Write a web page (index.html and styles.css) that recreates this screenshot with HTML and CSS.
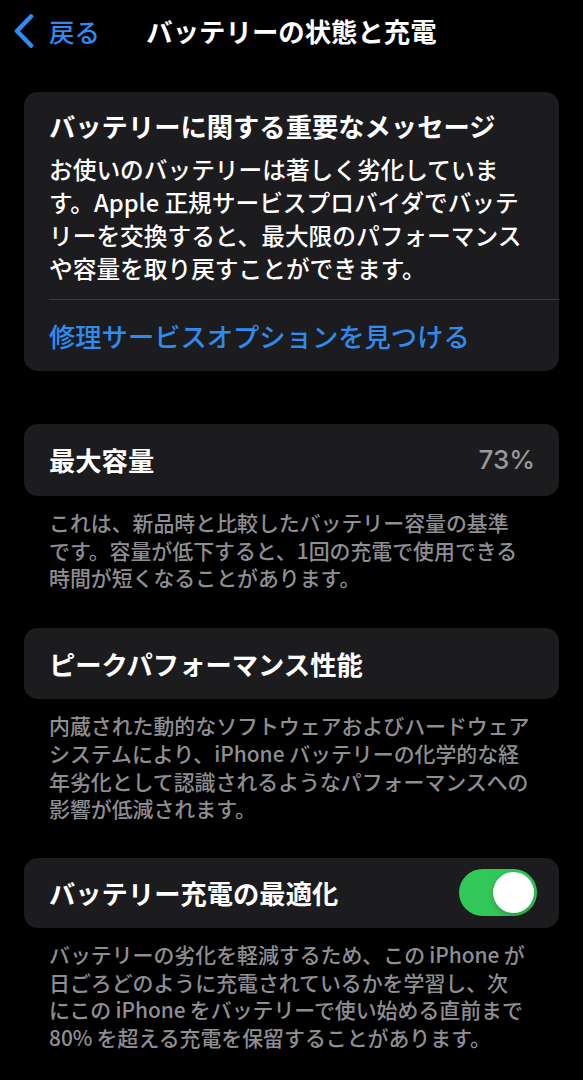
FILE: index.html
```html
<!DOCTYPE html>
<html lang="ja">
<head>
<meta charset="utf-8">
<title>バッテリーの状態と充電</title>
<link rel="stylesheet" href="styles.css">
</head>
<body>
<header class="nav">
  <div class="nav-left">
    <svg class="chev" width="22" height="34" viewBox="0 0 22 34" aria-hidden="true">
      <polyline points="18,2.5 4,17 18,31.5" fill="none" stroke="#2f8bf0" stroke-width="4.6" stroke-linecap="round" stroke-linejoin="round"/>
    </svg>
    <span class="back">戻る</span>
  </div>
  <h1 class="nav-title">バッテリーの状態と充電</h1>
  <div></div>
</header>

<main class="content">
  <section class="card msg">
    <h2 class="msg-title">バッテリーに関する重要なメッセージ</h2>
    <p class="msg-body">お使いのバッテリーは著しく劣化していま<br>す。Apple 正規サービスプロバイダでバッテ<br>リーを交換すると、最大限のパフォーマンス<br>や容量を取り戻すことができます。</p>
    <div class="divider"></div>
    <div class="link-row"><span class="link">修理サービスオプションを見つける</span></div>
  </section>

  <section class="card row first">
    <span class="label">最大容量</span>
    <span class="value">73%</span>
  </section>
  <p class="foot">これは、新品時と比較したバッテリー容量の基準<br>です。容量が低下すると、1回の充電で使用できる<br>時間が短くなることがあります。</p>

  <section class="card row">
    <span class="label">ピークパフォーマンス性能</span>
  </section>
  <p class="foot">内蔵された動的なソフトウェアおよびハードウェア<br>システムにより、iPhone バッテリーの化学的な経<br>年劣化として認識されるようなパフォーマンスへの<br>影響が低減されます。</p>

  <section class="card row toggle-row">
    <span class="label">バッテリー充電の最適化</span>
    <span class="switch"><span class="knob"></span></span>
  </section>
  <p class="foot">バッテリーの劣化を軽減するため、この&#8201;iPhone&#8201;が<br>日ごろどのように充電されているかを学習し、次<br>にこの&#8201;iPhone&#8201;をバッテリーで使い始める直前まで<br>80%&#8201;を超える充電を保留することがあります。</p>
</main>
</body>
</html>
```

FILE: styles.css
```css
* { box-sizing: border-box; }
html, body {
  margin: 0;
  padding: 0;
  background: #000;
}
body {
  width: 583px;
  height: 1080px;
  overflow: hidden;
  font-family: "Noto Sans CJK JP", "Noto Sans", sans-serif;
  color: #fff;
}
.nav {
  height: 62px;
  display: grid;
  grid-template-columns: 1fr auto 1fr;
  align-items: center;
}
.nav-left {
  display: flex;
  align-items: center;
  padding-left: 13px;
  gap: 14px;
}
.chev { display: block; }
.back {
  color: #2f8bf0;
  font-size: 25.5px;
  line-height: 34px;
  font-weight: 500;
}
.nav-title {
  margin: 0;
  font-size: 26.4px;
  line-height: 34px;
  font-weight: 700;
}
.content {
  padding: 30px 24px 0 24px;
}
.card {
  background: #1c1c1e;
  border-radius: 14px;
}
.msg {
  padding: 17px 0 0 25px;
}
.msg-title {
  margin: 0;
  font-size: 26.3px;
  line-height: 34px;
  font-weight: 700;
}
.msg-body {
  margin: 10px 0 0 0;
  font-size: 23.7px;
  line-height: 33px;
  font-weight: 500;
  white-space: nowrap;
}
.divider {
  margin-top: 14px;
  height: 1px;
  background: #38383a;
}
.link-row {
  height: 71px;
  display: flex;
  align-items: center;
}
.link {
  color: #2f8bf0;
  font-size: 26.3px;
  line-height: 34px;
  font-weight: 500;
}
.row {
  height: 71px;
  display: flex;
  align-items: center;
  justify-content: space-between;
  padding: 0 24px 0 25px;
  margin-top: 36px;
}
.row.first { margin-top: 53px; height: 72px; }
.label {
  font-size: 26.3px;
  line-height: 34px;
  font-weight: 700;
}
.value {
  color: #98989e;
  font-family: "Inter", "Noto Sans", sans-serif;
  font-size: 26px;
  line-height: 34px;
  font-weight: 500;
}
.toggle-row { padding-right: 22px; height: 70px; margin-top: 35px; }
.switch {
  width: 78px;
  height: 47px;
  border-radius: 24px;
  background: #32c759;
  display: flex;
  align-items: center;
  justify-content: flex-end;
  padding-right: 3px;
}
.knob {
  width: 41px;
  height: 41px;
  border-radius: 50%;
  background: #fff;
  box-shadow: 0 2px 5px rgba(0,0,0,0.25);
}
.foot {
  margin: 13px 0 0 0;
  padding-left: 25px;
  color: #8e8e93;
  font-size: 20.9px;
  line-height: 27.7px;
  font-weight: 500;
  white-space: nowrap;
}
```
